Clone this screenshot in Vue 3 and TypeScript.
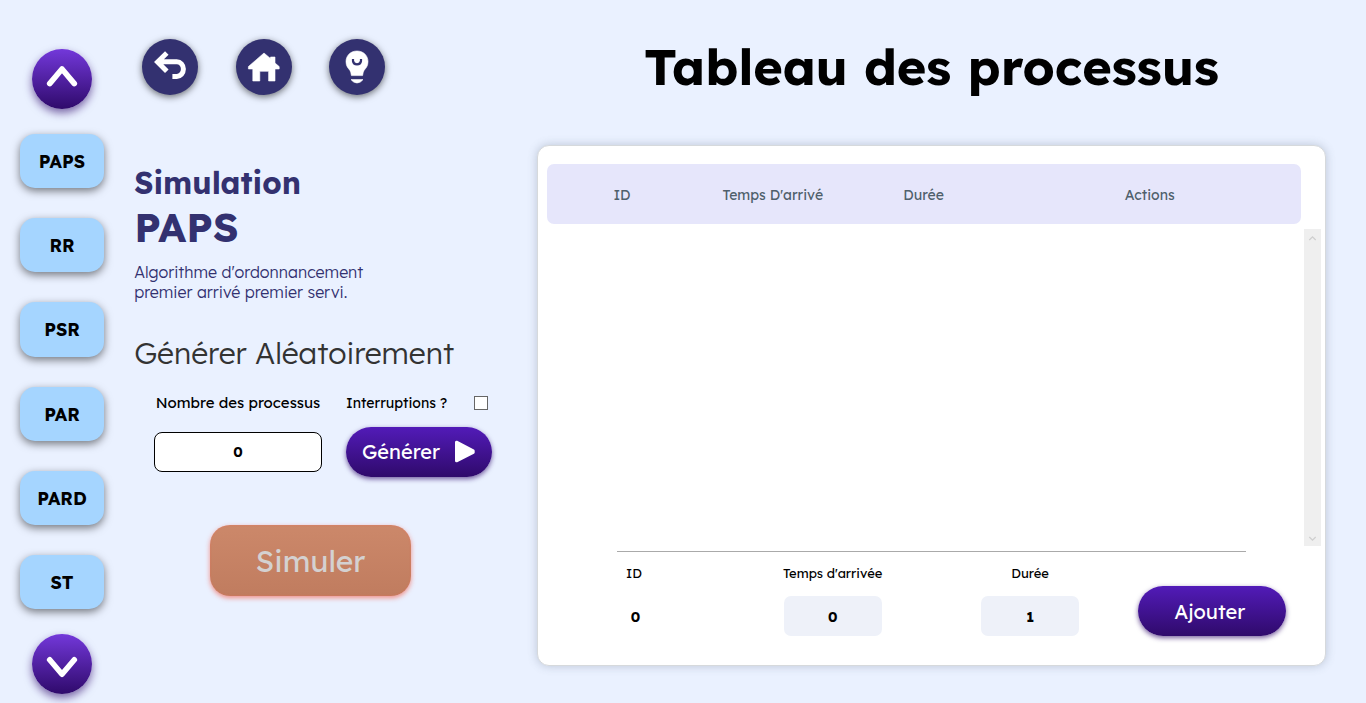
<script setup lang="ts">
import { ref } from 'vue'

const algorithms = ['PAPS', 'RR', 'PSR', 'PAR', 'PARD', 'ST']
const columns = ['ID', "Temps D'arrivé", 'Durée', 'Actions']
const count = ref('0')
const arrival = ref('0')
const duration = ref('1')
const interruptions = ref(false)
</script>

<template>
  <div class="page">
    <aside class="sidebar">
      <button class="scroll" type="button" aria-label="Précédent">
        <svg width="60" height="60" viewBox="0 0 60 60"><path d="M17.7 34.6 30 20 42.3 34.6" /></svg>
      </button>
      <div class="algos">
        <button v-for="name in algorithms" :key="name" class="algo" type="button">{{ name }}</button>
      </div>
      <button class="scroll" type="button" aria-label="Suivant">
        <svg width="60" height="60" viewBox="0 0 60 60"><path d="M17.7 25.8 30 40.2 42.3 25.8" /></svg>
      </button>
    </aside>

    <section class="controls">
      <nav class="nav">
        <button class="round" type="button" aria-label="Retour">
          <svg width="56" height="56" viewBox="0 0 56 56">
            <path class="line" d="M24.8 14 15.6 23 24.8 32.2M16 22.8H34.8A6.6 7.3 0 0 1 34.8 37.4H30.4" />
          </svg>
        </button>
        <button class="round" type="button" aria-label="Accueil">
          <svg width="56" height="56" viewBox="0 0 56 56">
            <path class="fill" d="M28 14 34.5 19.6V18H39V24L43.2 27.6V30H39V42H32.6V32.3H23.8V42H16.8V30H12.4V27.6Z" />
          </svg>
        </button>
        <button class="round" type="button" aria-label="Astuce">
          <svg width="56" height="56" viewBox="0 0 56 56">
            <path class="fill" d="M28 12C21.5 12 17 16.7 17 22.5C17 27 19 29 20.8 31.2Q22 32.8 22.4 36.6H33.6Q34 32.8 35.2 31.2C37 29 39 27 39 22.5C39 16.7 34.5 12 28 12ZM22 40.6H34Q31.5 44 28 44T22 40.6Z" />
            <path class="cut" d="M24 20V22Q24.4 25.3 28 25.3T32 22V20" />
          </svg>
        </button>
      </nav>

      <h2 class="kicker">Simulation</h2>
      <h1 class="algo-title">PAPS</h1>
      <p class="desc">Algorithme d'ordonnancement<br />premier arrivé premier servi.</p>
      <h3 class="random-title">Générer Aléatoirement</h3>

      <div class="generator">
        <div class="field">
          <label for="count">Nombre des processus</label>
          <input id="count" v-model="count" class="count" type="text" />
        </div>
        <div class="launch">
          <label class="inter">Interruptions ?<input v-model="interruptions" type="checkbox" /></label>
          <button class="pill generate" type="button">
            Générer
            <svg width="20" height="23" viewBox="0 0 20 23"><path d="M1.5 2.2V20.8L18.2 12.5V10.9Z" /></svg>
          </button>
        </div>
      </div>
      <button class="simulate" type="button"><span>Simuler</span></button>
    </section>

    <main class="board">
      <h1 class="title">Tableau des processus</h1>
      <div class="card">
        <div class="thead">
          <span v-for="c in columns" :key="c">{{ c }}</span>
        </div>
        <div class="tbody">
          <div class="track">
            <svg width="17" height="17" viewBox="0 0 17 17"><path d="M5.3 11 8.5 7.8 11.7 11" /></svg>
            <svg width="17" height="17" viewBox="0 0 17 17"><path d="M5.3 8 8.5 11.2 11.7 8" /></svg>
          </div>
        </div>
        <div class="add">
          <div class="cell id"><span>ID</span><b>0</b></div>
          <div class="cell arrival"><span>Temps d'arrivée</span><input v-model="arrival" type="text" /></div>
          <div class="cell duration"><span>Durée</span><input v-model="duration" type="text" /></div>
          <button class="pill append" type="button">Ajouter</button>
        </div>
      </div>
    </main>
  </div>
</template>

<style>
body {
  margin: 0;
  background: #eaf1ff;
  overflow: hidden;
}
</style>

<style scoped>
.page {
  box-sizing: border-box;
  width: 1366px;
  height: 703px;
  display: flex;
  overflow: hidden;
  background: #eaf1ff;
  font-family: Lexend, Inter, sans-serif;
  color: #000;
}
h1, h2, h3, p { margin: 0; }
button, input { font-family: inherit; box-sizing: border-box; }
button { border: 0; padding: 0; color: inherit; }
svg { display: block; flex: none; }

.sidebar {
  width: 124px;
  flex: none;
  padding-top: 49px;
  display: flex;
  flex-direction: column;
  align-items: center;
  gap: 25px;
}
.scroll {
  width: 60px;
  height: 60px;
  flex: none;
  border-radius: 50%;
  background: linear-gradient(#7338da, #2f0a6b);
  box-shadow: 0 4px 8px rgba(47, 10, 107, 0.6);
}
.scroll path {
  fill: none;
  stroke: #fff;
  stroke-width: 5.6;
  stroke-linecap: round;
  stroke-linejoin: round;
}
.algos { display: flex; flex-direction: column; gap: 30px; }
.algo {
  width: 84px;
  height: 54.19px;
  border-radius: 15px;
  background: #a5d5ff;
  box-shadow: 0 3px 9px rgba(0, 0, 0, 0.5);
  font-size: 17.9px;
  font-weight: 700;
}

.controls {
  width: 413px;
  flex: none;
  box-sizing: border-box;
  padding: 39px 0 0 10.2px;
  display: flex;
  flex-direction: column;
}
.nav { display: flex; gap: 37.3px; padding-left: 8.1px; height: 56px; }
.round {
  width: 56px;
  height: 56px;
  border-radius: 50%;
  background: #333170;
  box-shadow: 0 2px 7px rgba(0, 0, 0, 0.55);
}
.line { fill: none; stroke: #fff; stroke-width: 5; }
.fill { fill: #fff; stroke: #fff; stroke-width: 0.6; stroke-linejoin: round; }
.cut { fill: none; stroke: #333170; stroke-width: 2.2; }

.kicker { margin-top: 69px; font-size: 30.3px; line-height: 38px; font-weight: 700; color: #333170; }
.algo-title { margin-top: 0; font-size: 40.3px; line-height: 50px; font-weight: 700; color: #333170; }
.desc { margin-top: 10px; font-size: 16px; line-height: 20px; font-weight: 300; color: #333170; }
.random-title { margin-top: 32px; font-size: 30px; line-height: 38px; font-weight: 300; color: #333; }

.generator { display: flex; gap: 24px; padding-left: 19.8px; margin-top: 21px; height: 85px; }
.field { width: 168px; display: flex; flex-direction: column; align-items: center; gap: 19px; }
.field label { font-size: 15px; line-height: 20px; }
.count {
  width: 168px;
  height: 40px;
  flex: none;
  border: 1px solid #000;
  border-radius: 8px;
  background: #fff;
  text-align: center;
  font-size: 14px;
  font-weight: 700;
  padding: 0;
}
.launch { width: 146px; display: flex; flex-direction: column; gap: 14px; }
.inter { display: flex; align-items: center; justify-content: space-between; font-size: 14px; line-height: 20px; height: 20px; }
.inter input {
  appearance: none;
  width: 14px;
  height: 14px;
  margin: 0 4px 0 0;
  border: 1px solid #666;
  background: #fff;
}
.pill {
  height: 50px;
  border-radius: 25px;
  background: linear-gradient(#521bb8, #2f0a6b);
  box-shadow: 0 2px 5px rgba(47, 10, 107, 0.65);
  color: #fff;
  font-size: 20px;
  font-weight: 400;
}
.generate { width: 146px; flex: none; display: flex; align-items: center; justify-content: space-between; padding: 0 17px 0.6px 16px; }
.generate path { fill: #fff; stroke: #fff; stroke-width: 3; stroke-linejoin: round; }
.simulate {
  width: 201px;
  height: 71px;
  flex: none;
  margin: 47px 0 0 75.8px;
  border-radius: 20px;
  background: linear-gradient(#cc886a, #c07c5f);
  box-shadow: 0 2px 5px rgba(244, 90, 70, 0.65), inset 0 0 2px rgba(244, 110, 90, 0.6);
  color: #d4d1d1;
  font-size: 30px;
  font-weight: 400;
}

.board { width: 790px; flex: none; }
.title { height: 145px; box-sizing: border-box; padding: 35px 1px 0 0; text-align: center; font-size: 50.4px; line-height: 63px; font-weight: 700; }
.card {
  width: 789px;
  height: 521px;
  box-sizing: border-box;
  border: 1px solid #d6d9dc;
  border-radius: 12px;
  background: #fff;
  box-shadow: 0 0 10px rgba(80, 95, 115, 0.3);
  padding: 18.4px 4px 0 8.6px;
}
.thead {
  width: 754px;
  height: 60px;
  box-sizing: border-box;
  padding-top: 1px;
  display: grid;
  grid-template-columns: 1fr 1fr 1fr 2fr;
  align-items: center;
  text-align: center;
  border-radius: 7px;
  background: #e6e6fb;
  color: #4f5f6b;
  font-size: 14px;
}
.tbody { height: 317px; margin-top: 4.6px; display: flex; justify-content: flex-end; }
.track { width: 17px; background: #efefef; display: flex; flex-direction: column; justify-content: space-between; }
.track path { fill: none; stroke: #cfcfcf; stroke-width: 1.3; }
.add {
  width: 629px;
  margin: 5px 0 0 70.4px;
  border-top: 1px solid #aaa;
  display: flex;
}
.cell { display: flex; flex-direction: column; align-items: center; padding-top: 11px; font-size: 13px; line-height: 20px; }
.cell b { margin-top: 14px; height: 40px; line-height: 40px; font-size: 14px; padding-left: 3px; }
.cell input {
  width: 98px;
  height: 40px;
  margin-top: 13.2px;
  padding: 1px 0 0;
  border: 0;
  border-radius: 7px;
  background: #eef1f9;
  text-align: center;
  font-size: 14px;
  font-weight: 700;
}
.id { width: 34px; }
.arrival { margin-left: 131.7px; width: 100px; }
.duration { margin-left: 97.4px; width: 100px; }
.append { width: 148px; flex: none; margin: 34px -41px 0 58.2px; padding: 1px 5px 0 0; }
</style>
